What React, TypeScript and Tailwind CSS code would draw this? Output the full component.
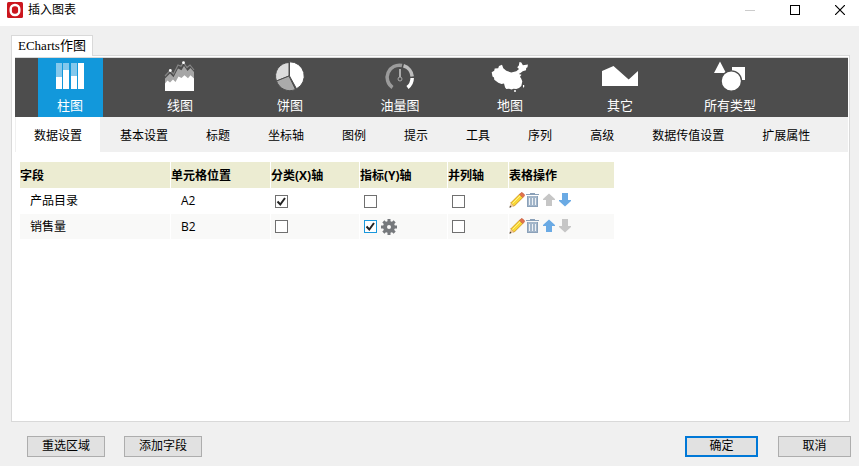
import React, { useState } from "react";
import clsx from "clsx";

// 图表类型图标
const BarIcon = () => (
	<svg width="40" height="32" viewBox="0 0 40 32" aria-hidden="true">
		<path fill="#84c8ec" d="M6 3h6v14H6zM13 3h6v7h-6zM21 3h6v13h-6z" />
		<path fill="#fff" d="M6 17h6v12H6zM13 10h6v19h-6zM21 16h6v13h-6zM28 3h6v26h-6z" />
	</svg>
);

const LineIcon = () => (
	<svg width="40" height="32" viewBox="0 0 40 32" aria-hidden="true">
		<path
			fill="#a6a6a6"
			d="M5 31V18.500l5-5 3.500 3.800L18 8.500l3.500 1.700L24 6l3.500 5L30.500 8 34 12v19z"
		/>
		<path
			fill="#fff"
			d="M5 31v-7.500l2.500-3 2.500 2 3-3 2.500 2.500 3-5.500 3 1.500 3-2.800 3.500 3 2.500-3 3.500 3.300V31z"
		/>
		<path
			fill="none"
			stroke="#858585"
			strokeWidth="1.200"
			d="M5 16l5-5.500 3.500 3.500L18 5l3 1.200L23.500 2.500 27 7.500l3-2.500 4 5"
		/>
		<circle cx="10.300" cy="10.500" r="1.400" fill="#fff" />
		<circle cx="23.500" cy="2.700" r="1.400" fill="#fff" />
	</svg>
);

const PieIcon = () => (
	<svg width="40" height="32" viewBox="0 0 40 32" aria-hidden="true">
		<g stroke="#4d4d4d" strokeWidth="1">
			<path fill="#ddd" d="M19 16V2.500A13.500 13.500 0 0 0 6.500 21z" />
			<path fill="#aaa" d="M19 16L6.500 21A14 14 0 0 0 25.500 29.500z" />
			<path fill="#fff" d="M19.500 16V1.800A14.300 14.300 0 0 1 26.500 28.800z" />
		</g>
	</svg>
);

const GaugeIcon = () => (
	<svg width="40" height="32" viewBox="0 0 40 32" aria-hidden="true">
		<g fill="none" strokeWidth="3.500">
			<path stroke="#9b9b9b" d="M12.500 27.500A12.200 12.200 0 0 1 22 5.500" />
			<path stroke="#bdbdbd" d="M23.500 5.800A12.200 12.200 0 0 1 32.200 16.500" />
			<path stroke="#fff" d="M32.200 18A12.200 12.200 0 0 1 27.500 27.500" />
		</g>
		<path stroke="#aaa" strokeWidth="2" d="M20 9v8" />
		<circle cx="20" cy="19" r="2" fill="none" stroke="#aaa" />
	</svg>
);

const MapIcon = () => (
	<svg width="40" height="32" viewBox="0 0 40 32" aria-hidden="true">
		<g fill="#fff">
			<path d="M1.700 12.200l2.500-1.500.5-2.200 3.500-.2L9 6l3-1.200 1.300 3.500 3 2.500 5 1.700 5-1.200L29 9l-1.800-1.700 1.600-1.800.7-3.500 1.800.5 1.600 2.800 5-.8-.4 2.800-1.300.8-.2 2.200-3.300 1-2.200 1.700-1.700 1 2.700.7-1.500 2 1.300 2 1 2.800-1 4.500-2.300 2-2.700 1-2.800-.3-1.800.8-2.700-.8-2.700.3-1.200-1.500-1.100-4-2.500.4-3.200-1.200-4-3-.3-2.300-1.500-1z" />
			<circle cx="25" cy="31" r="1" />
			<path d="M33 25h1.200v2l-1.200.800z" />
		</g>
	</svg>
);

const AreaIcon = () => (
	<svg width="40" height="32" viewBox="0 0 40 32" aria-hidden="true">
		<path fill="#fff" d="M2 11l11.500-5 15.200 13.500L38 11v15H2z" />
	</svg>
);

const ShapesIcon = () => (
	<svg width="40" height="32" viewBox="0 0 40 32" aria-hidden="true">
		<path fill="#fff" d="M10 1.500L16 13H4zM22 7h13v13H22z" />
		<circle cx="21.300" cy="21" r="10.200" fill="#fff" stroke="#4d4d4d" strokeWidth="1.300" />
	</svg>
);

// 表格操作图标
const PencilIcon = () => (
	<svg width="16" height="16" viewBox="0 0 16 16" aria-hidden="true">
		<path fill="#f9d835" stroke="#c98a17" strokeWidth=".8" d="M1.700 11L10.500 2.200l3.300 3.300L5 14.300z" />
		<path stroke="#fcee8c" d="M3.500 11.500l8-8" />
		<path
			fill="#e2734d"
			stroke="#c0553a"
			strokeWidth=".6"
			d="M10.500 2.300l1.500-1.500q.8-.5 1.500 0l1.800 1.800q.5.700 0 1.400l-1.500 1.500z"
		/>
		<path fill="#f0c695" d="M1.700 11l3.300 3.300-4.500 1.200z" />
		<path fill="#333" d="M1 13.500l1.500 1.500-2 .700z" />
	</svg>
);

const TrashIcon = () => (
	<svg width="16" height="16" viewBox="0 0 16 16" shapeRendering="crispEdges" aria-hidden="true">
		<path fill="#8ba1b9" d="M5 1h5v1h4v1H1V2h4zM2 4h11v11H2z" />
		<path fill="#a3b6ca" d="M3 4h9v10H3z" />
		<path fill="#edf1f5" d="M4 6h1v7H4zM7 6h1v7H7zM10 6h1v7h-1z" />
	</svg>
);

const ArrowIcon = ({ down }: { down?: boolean }) => (
	<svg width="16" height="16" viewBox="0 0 16 16" fill="currentColor" aria-hidden="true">
		{down ? <path d="M5 1h6v7h3v1l-6 5.500L2 9V8h3z" /> : <path d="M8 1.500L14 7v1h-3v6H5V8H2V7z" />}
	</svg>
);

const GearIcon = () => (
	<svg width="16" height="16" viewBox="0 0 16 16" aria-hidden="true">
		<g fill="#76797c">
			<path d="M6.500 0h3v16h-3zM0 6.500h16v3H0z" />
			<path d="M1.300 3.400l2.100-2.100 11.300 11.300-2.100 2.100zM12.600 1.300l2.100 2.100L3.400 14.700l-2.100-2.100z" />
			<circle cx="8" cy="8" r="6" />
		</g>
		<circle cx="8" cy="8" r="2" fill="#f9f9f8" />
	</svg>
);

const chartTypes = [
	{ name: "柱图", icon: <BarIcon /> },
	{ name: "线图", icon: <LineIcon /> },
	{ name: "饼图", icon: <PieIcon /> },
	{ name: "油量图", icon: <GaugeIcon /> },
	{ name: "地图", icon: <MapIcon /> },
	{ name: "其它", icon: <AreaIcon /> },
	{ name: "所有类型", icon: <ShapesIcon /> },
];

const settingTabs = [
	"数据设置",
	"基本设置",
	"标题",
	"坐标轴",
	"图例",
	"提示",
	"工具",
	"序列",
	"高级",
	"数据传值设置",
	"扩展属性",
];

const columns = [
	{ title: "字段", width: "w-[151px]" },
	{ title: "单元格位置", width: "w-[100px]" },
	{ title: "分类(X)轴", width: "w-[89px]" },
	{ title: "指标(Y)轴", width: "w-[88px]" },
	{ title: "并列轴", width: "w-[61px]" },
	{ title: "表格操作", width: "w-[105px]" },
];

const fields = [
	{ name: "产品目录", cell: "A2", x: true, y: false, parallel: false },
	{ name: "销售量", cell: "B2", x: false, y: true, parallel: false },
];

interface CheckProps {
	label: string;
	defaultChecked: boolean;
	active?: boolean;
}
const Check = ({ label, defaultChecked, active }: CheckProps) => (
	<label className="grid size-[13px] shrink-0">
		<input
			type="checkbox"
			aria-label={label}
			defaultChecked={defaultChecked}
			className={clsx(
				"peer col-start-1 row-start-1 size-[13px] appearance-none border bg-white",
				active ? "border-[#1a98dc]" : "border-[#707070]"
			)}
		/>
		<svg
			viewBox="0 0 13 13"
			className="pointer-events-none invisible col-start-1 row-start-1 size-[13px] peer-checked:visible"
			aria-hidden="true"
		>
			<path d="M2.500 6.500l2.800 3 4.700-6.500" fill="none" stroke="#222" strokeWidth="2" />
		</svg>
	</label>
);

interface DialogButtonProps {
	children: React.ReactNode;
	className: string;
}
const DialogButton = ({ children, className }: DialogButtonProps) => (
	<button className={clsx("flex h-[21px] items-center justify-center bg-[#e1e1e1] pb-0.5", className)}>
		{children}
	</button>
);

export default function App() {
	const [chart, setChart] = useState(0);
	const [tab, setTab] = useState(0);

	return (
		<div className="flex min-h-screen flex-col bg-[#f0f0f0] font-['Open_Sans','Noto_Sans_CJK_SC',sans-serif] text-xs leading-4 text-black">
			{/* 标题栏 */}
			<header className="flex h-[26px] items-start justify-between bg-white pt-0.5 pr-3.5 pl-[7px]">
				<div className="flex items-center gap-[5px]">
					<svg width="16" height="16" viewBox="0 0 16 16" aria-hidden="true">
						<rect width="16" height="16" rx="1.500" fill="#cb161e" />
						<rect x="3.700" y="3" width="8.600" height="10" rx="4" fill="none" stroke="#fff" strokeWidth="2.400" />
					</svg>
					<h1>插入图表</h1>
				</div>
				<div className="flex h-4 items-center gap-[35px]">
					<button aria-label="最小化">
						<svg width="10" height="10" className="block" shapeRendering="crispEdges">
							<path stroke="#ccc" d="M0 5.500h10" />
						</svg>
					</button>
					<button aria-label="最大化">
						<svg width="10" height="10" className="block" shapeRendering="crispEdges">
							<path fill="none" stroke="#000" d="M.5.5h9v9h-9z" />
						</svg>
					</button>
					<button aria-label="关闭">
						<svg width="10" height="10" className="block">
							<path fill="none" stroke="#000" strokeWidth="1.200" d="M0 0l10 10M10 0L0 10" />
						</svg>
					</button>
				</div>
			</header>

			<main className="flex flex-1 flex-col pt-[9px] pr-[9px] pl-[11px]">
				<div className="relative z-10 -mb-px flex">
					<button className="h-[21px] border border-b-0 border-[#d9d9d9] bg-white px-1.5 font-['Liberation_Serif','Noto_Sans_CJK_SC',serif] text-[13px]">
						ECharts作图
					</button>
				</div>
				<section className="flex-1 border border-[#d9d9d9] bg-white pt-px pr-px pl-[3px]">
					{/* 图表类型 */}
					<nav className="flex gap-[45px] border-t border-[#d9d9d9] bg-[#4d4d4d] pl-[23px]">
						{chartTypes.map((item, i) => (
							<button
								key={item.name}
								onClick={() => setChart(i)}
								className={clsx(
									"flex h-[59px] w-[65px] flex-col items-center pt-0.5 pr-px text-[13px] text-white",
									chart === i && "bg-[#1298db]"
								)}
							>
								{item.icon}
								<span className="pt-[5px]">{item.name}</span>
							</button>
						))}
					</nav>

					{/* 设置项 */}
					<nav className="flex gap-0.5 border-l border-[#f0f0f0] bg-[#f0f0f0]">
						{settingTabs.map((name, i) => (
							<button
								key={name}
								onClick={() => setTab(i)}
								className={clsx("h-[35px] px-[18px] pt-0.5 whitespace-nowrap", tab === i && "bg-white")}
							>
								{name}
							</button>
						))}
					</nav>

					{/* 字段列表 */}
					<table className="mt-2.5 ml-[5px] w-[594px] table-fixed border-separate border-spacing-0 text-left">
						<thead>
							<tr className="h-[26px] bg-[#ececd2]">
								{columns.map((col) => (
									<th
										key={col.title}
										className={clsx("border-r border-white p-0 pt-0.5 font-bold last:border-r-0", col.width)}
									>
										{col.title}
									</th>
								))}
							</tr>
						</thead>
						<tbody>
							{fields.map((field, i) => (
								<tr
									key={field.name}
									className="h-[25px] odd:h-[26px] even:bg-[#f9f9f8] [&>td]:border-r [&>td]:border-white [&>td]:p-0 [&>td:last-child]:border-r-0"
								>
									<td>
										<div className="pl-2.5">{field.name}</div>
									</td>
									<td>
										<div className="pl-2.5">{field.cell}</div>
									</td>
									<td>
										<div className="pl-1">
											<Check label={`${field.name} 分类(X)轴`} defaultChecked={field.x} />
										</div>
									</td>
									<td>
										<div className="flex items-center gap-1 pl-1">
											<Check label={`${field.name} 指标(Y)轴`} defaultChecked={field.y} active={field.y} />
											{field.y && (
												<button aria-label="设置">
													<GearIcon />
												</button>
											)}
										</div>
									</td>
									<td>
										<div className="pl-1">
											<Check label={`${field.name} 并列轴`} defaultChecked={field.parallel} />
										</div>
									</td>
									<td>
										<div className="flex pb-0.5">
											<button aria-label="编辑">
												<PencilIcon />
											</button>
											<button aria-label="删除">
												<TrashIcon />
											</button>
											<button aria-label="上移" className={i === 0 ? "text-[#c6c6c6]" : "text-[#6aaae4]"}>
												<ArrowIcon />
											</button>
											<button
												aria-label="下移"
												className={i === fields.length - 1 ? "text-[#c6c6c6]" : "text-[#6aaae4]"}
											>
												<ArrowIcon down />
											</button>
										</div>
									</td>
								</tr>
							))}
						</tbody>
					</table>
				</section>
			</main>

			{/* 底部按钮 */}
			<footer className="flex justify-between pt-3.5 pr-2 pb-[9px] pl-[27px]">
				<div className="flex gap-[19px]">
					<DialogButton className="w-[78px] border border-[#adadad]">重选区域</DialogButton>
					<DialogButton className="w-[78px] border border-[#adadad]">添加字段</DialogButton>
				</div>
				<div className="flex gap-5">
					<DialogButton className="w-[73px] border-2 border-[#0078d7]">确定</DialogButton>
					<DialogButton className="w-[73px] border border-[#adadad]">取消</DialogButton>
				</div>
			</footer>
		</div>
	);
}
